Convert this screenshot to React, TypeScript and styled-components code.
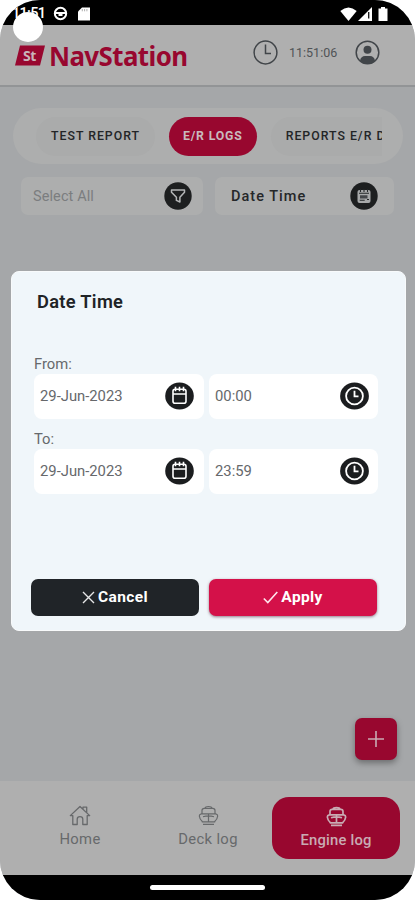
import React from "react";
import styled, { createGlobalStyle, css } from "styled-components";

const GlobalStyle = createGlobalStyle`
  * { box-sizing: border-box; }
  body { margin: 0; background: #fff; font-family: Roboto, "Liberation Sans", sans-serif; }
  svg { display: block; flex: none; }
`;

const Phone = styled.div`
  position: relative;
  display: flex;
  flex-direction: column;
  width: 415px;
  height: 900px;
  overflow: hidden;
  border-radius: 40px;
  background: #a5a7a9;
`;

const StatusBar = styled.div`
  display: flex;
  align-items: center;
  flex: none;
  height: 25px;
  padding: 2px 27px 0 12px;
  background: #000;
  color: #fff;
  font-size: 14.5px;
  font-weight: 500;
`;

const StatusTime = styled.span`
  width: 41px;
  letter-spacing: -0.7px;
`;

const StatusIcons = styled.div<{ $end?: boolean }>`
  display: flex;
  align-items: center;
  gap: ${(p) => (p.$end ? 1 : 10)}px;
  margin-left: ${(p) => (p.$end ? "auto" : "0")};
`;

const CameraHole = styled.div`
  position: absolute;
  left: 13px;
  top: 12px;
  width: 30px;
  height: 30px;
  border-radius: 50%;
  background: #fff;
`;

const Header = styled.header`
  display: flex;
  align-items: center;
  flex: none;
  height: 62px;
  padding: 0 35px 5px 15px;
  background: #afafaf;
  border-bottom: 2px solid #929496;
`;

const Brand = styled.div`
  display: flex;
  align-items: center;
  gap: 4px;
  width: 238px;
  padding-top: 6px;
  color: #98072f;
`;

const BrandName = styled.span`
  transform: scaleX(0.94);
  transform-origin: left;
  font-family: "Noto Sans", sans-serif;
  font-size: 27.5px;
  font-weight: 700;
  line-height: 30px;
  letter-spacing: -0.6px;
`;

const Clock = styled.span`
  margin: 0 auto 0 11px;
  color: #505356;
  font-size: 12.5px;
`;

const Content = styled.main`
  display: flex;
  flex-direction: column;
  flex: 1;
  padding: 21px 12px 0 13px;
`;

const Tabs = styled.div`
  height: 56px;
  padding: 0 21px 0 23px;
  border-radius: 28px;
  background: #adaeae;
`;

const TabScroller = styled.div`
  display: flex;
  align-items: center;
  gap: 14px;
  height: 56px;
  overflow: hidden;
`;

const Tab = styled.div<{ $active?: boolean }>`
  flex: none;
  height: 39px;
  padding: 0 ${(p) => (p.$active ? 14 : 15)}px;
  border-radius: 20px;
  background: ${(p) => (p.$active ? "#98072f" : "#aaabab")};
  color: ${(p) => (p.$active ? "#c9babe" : "#232527")};
  font-size: 12.3px;
  font-weight: ${(p) => (p.$active ? 700 : 500)};
  line-height: 38px;
  letter-spacing: ${(p) => (p.$active ? 0.82 : 1)}px;
  white-space: nowrap;
`;

const Filters = styled.div`
  display: flex;
  gap: 12px;
  margin: 12px 0 0 8px;
`;

const Filter = styled.div<{ $strong?: boolean }>`
  display: flex;
  align-items: center;
  justify-content: space-between;
  width: ${(p) => (p.$strong ? 179 : 182)}px;
  height: 38px;
  margin-top: 1px;
  padding: 0 ${(p) => (p.$strong ? "16px 0 16px" : "11px 0 12px")};
  border-radius: 7px;
  background: #adaeae;
  color: ${(p) => (p.$strong ? "#252729" : "#7b7d7f")};
  font-size: 14.5px;
  font-weight: ${(p) => (p.$strong ? 500 : 400)};
  letter-spacing: ${(p) => (p.$strong ? 1.02 : 0.1)}px;
`;

const AddButton = styled.button`
  display: flex;
  align-items: center;
  justify-content: center;
  align-self: flex-end;
  width: 42px;
  height: 42px;
  margin: auto 6px 21px 0;
  padding: 0;
  border: 0;
  border-radius: 7px;
  background: #98072f;
  box-shadow: 0 3px 6px rgba(0, 0, 0, 0.35);
`;

const BottomNav = styled.nav`
  display: flex;
  flex: none;
  height: 94px;
  padding: 16px 15px 0 16px;
  background: #afafaf;
`;

const NavItem = styled.div<{ $active?: boolean }>`
  display: flex;
  flex-direction: column;
  align-items: center;
  width: 128px;
  height: 62px;
  padding-top: 8px;
  gap: 4px;
  border-radius: 17px;
  color: #67696b;
  font-size: 14.8px;
  line-height: 18px;
  letter-spacing: 0.35px;
  ${(p) =>
    p.$active &&
    css`
      padding-top: 9px;
      background: #98072f;
      color: #c9abb3;
      font-weight: 500;
      letter-spacing: 0.2px;
    `}
`;

const GestureBar = styled.div`
  display: flex;
  justify-content: center;
  flex: none;
  height: 25px;
  padding-top: 10px;
  background: #000;
`;

const GestureHandle = styled.div`
  width: 115px;
  height: 5px;
  border-radius: 3px;
  background: #fff;
`;

const Dialog = styled.section`
  position: absolute;
  left: 11px;
  top: 271px;
  display: flex;
  flex-direction: column;
  width: 395px;
  height: 360px;
  padding: 18px 28px 14px 19px;
  border: 1px solid #f8fafb;
  border-radius: 8px;
  background: #f0f6fa;
`;

const DialogTitle = styled.h2`
  margin: 0 0 41px 6px;
  color: #202326;
  font-size: 18.3px;
  font-weight: 600;
  line-height: 24px;
  letter-spacing: 0.3px;
`;

const Label = styled.div`
  height: 19px;
  padding-left: 3px;
  color: #66696c;
  font-size: 14.8px;
  line-height: 18px;
`;

const FieldRow = styled.div`
  display: grid;
  grid-template-columns: 170px 169px;
  gap: 5px;
  margin: 0 0 11px 3px;
`;

const Field = styled.div`
  display: flex;
  align-items: center;
  justify-content: space-between;
  height: 45px;
  padding: 0 9px 1px 6px;
  border-radius: 8px;
  background: #fff;
  color: #66686b;
  font-size: 14.8px;
`;

const Actions = styled.div`
  display: grid;
  grid-template-columns: 168px 168px;
  gap: 10px;
  margin-top: auto;
`;

const ActionButton = styled.button<{ $primary?: boolean }>`
  display: flex;
  align-items: center;
  justify-content: center;
  gap: 3px;
  height: 37px;
  padding: 0 0 1px;
  border: 0;
  border-radius: 7px;
  background: ${(p) => (p.$primary ? "#d41149" : "#202428")};
  box-shadow: ${(p) => (p.$primary ? "0 1px 3px rgba(70, 20, 40, 0.55)" : "none")};
  color: #fff;
  font-family: inherit;
  font-size: 15.5px;
  font-weight: 700;
  letter-spacing: 0.35px;
`;

const BrandMark = () => (
  <svg width="30" height="21" viewBox="0 0 30 21">
    <path d="M5 .5h25l-5 20H0z" fill="#98072f" />
    <text x="14.5" y="15.5" textAnchor="middle" fill="#c9b4ba" fontFamily="Noto Sans, sans-serif" fontSize="14" fontWeight="700" letterSpacing="-.4">St</text>
  </svg>
);

const ClockOutline = () => (
  <svg width="25" height="25" viewBox="0 0 25 25" fill="none" stroke="#414549" strokeWidth="1.5">
    <circle cx="12.5" cy="12.5" r="11.4" />
    <path d="M12.5 4.5v9H18" />
  </svg>
);

const Profile = () => (
  <svg width="25" height="25" viewBox="0 0 25 25">
    <circle cx="12.5" cy="12.5" r="11.3" fill="none" stroke="#414549" strokeWidth="1.5" />
    <circle cx="12.5" cy="9.8" r="4" fill="#414549" />
    <path d="M5 20.5Q6 16 10 16h5q4 0 5 4.5Q17 24 12.5 24T5 20.5" fill="#414549" />
  </svg>
);

const FilterIcon = () => (
  <svg width="28" height="28" viewBox="0 0 28 28">
    <circle cx="14" cy="14" r="13.7" fill="#1d1f20" />
    <path d="M7.5 8h13v2.2l-4.6 5V20l-3.5-1.6v-3.2l-4.9-5z" fill="none" stroke="#b4b6b7" strokeWidth="1.5" strokeLinejoin="round" />
  </svg>
);

const SmallCalendar = () => (
  <svg width="28" height="28" viewBox="0 0 28 28">
    <circle cx="14" cy="14" r="13.7" fill="#1d1f20" />
    <rect x="7.5" y="8" width="13" height="13" rx="2" fill="#a7a9aa" />
    <path d="M9 11.2h10M10.5 7v3M14 7v3M17.5 7v3M9.7 18.3h5M17 17.5h2" stroke="#25282a" strokeWidth="1.1" />
    <path d="M10 13.2h7.5v3.2H10z" fill="#44474a" />
  </svg>
);

const CalendarIcon = () => (
  <svg width="30" height="28" viewBox="0 0 30 28">
    <ellipse cx="14.5" cy="14" rx="14.3" ry="13.5" fill="#1b1d1f" />
    <rect x="8" y="7.2" width="13" height="14" rx="2" fill="none" stroke="#fff" strokeWidth="1.6" />
    <path d="M8 12h13M10.5 4.8v4.5M14.5 4.8v4.5M18.5 4.8v4.5" stroke="#fff" strokeWidth="1.6" />
  </svg>
);

const ClockIcon = () => (
  <svg width="29" height="28" viewBox="0 0 29 28">
    <ellipse cx="14.5" cy="14" rx="14.4" ry="13.5" fill="#1b1d1f" />
    <circle cx="14.5" cy="14" r="8.4" fill="none" stroke="#fff" strokeWidth="1.8" />
    <path d="M14.5 8.8v5.6h4" fill="none" stroke="#fff" strokeWidth="1.8" />
  </svg>
);

const HomeIcon = () => (
  <svg width="22" height="21" viewBox="0 0 22 21" fill="none" stroke="currentColor" strokeWidth="1.3" strokeLinejoin="round">
    <path d="M1.3 10.6 11 1.5l9.7 9.1h-2.5v8.9h-4.4v-5.2q0-2.6-2.8-2.6t-2.8 2.6v5.2H3.8v-8.9zM14 4.2V2.1h3.7v5.4" />
  </svg>
);

const ShipIcon = ({ bold }: { bold?: boolean }) => (
  <svg width="21" height="21" viewBox="0 0 21 21" fill="none" stroke="currentColor" strokeWidth={bold ? 1.7 : 1.2} strokeLinejoin="round">
    <path d="M7 3.2Q7.3 1.5 10.5 1.5T14 3.2M4 8.8V5.5q0-2.2 2.3-2.2h8.4Q17 3.3 17 5.5v3.3M4.5 16.8Q1.5 14 1.3 11q0-1.8 2-2.2h14.4q2 .4 2 2.2-.2 3-3.2 5.8M10.5 8.8v7.5M5 11.8q5.5-1.8 11 0M3.8 16.8h13.4M5 19.3h11" />
  </svg>
);

const WheelIcon = () => (
  <svg width="15" height="15" viewBox="0 0 15 15" fill="none" stroke="#fff">
    <circle cx="7.5" cy="7.5" r="5.7" strokeWidth="2" />
    <path d="M2 7h11M5.5 9h4" strokeWidth="2" />
  </svg>
);

const SdCard = () => (
  <svg width="12" height="14" viewBox="0 0 12 14">
    <path d="M4 .5h8v13H0V4.5z" fill="#fff" />
    <path d="M4.3 2v2.3M6.6 2v2.3M8.9 2v2.3" stroke="#999" strokeWidth=".8" />
  </svg>
);

const Wifi = () => (
  <svg width="17" height="14" viewBox="0 0 17 14">
    <path d="M.3 4Q8.5-3.2 16.7 4L8.5 14z" fill="#fff" />
  </svg>
);

const Signal = () => (
  <svg width="14" height="14" viewBox="0 0 14 14">
    <path d="M14 0v14H0z" fill="#fff" />
    <path d="M10.7 5v6.5" stroke="#111" strokeWidth="1.3" />
  </svg>
);

const Battery = () => (
  <svg width="15" height="14" viewBox="0 0 15 14">
    <path d="M8 0h4v1.5h2.5V14h-9V1.5H8z" fill="#fff" />
  </svg>
);

const Cross = () => (
  <svg width="13" height="13" viewBox="0 0 13 13">
    <path d="m1 1 11 11M12 1 1 12" stroke="#e6e7e8" strokeWidth="1.4" />
  </svg>
);

const Check = () => (
  <svg width="15" height="13" viewBox="0 0 15 13">
    <path d="m.8 7.5 4 4L14.3 1" fill="none" stroke="#ffe6ed" strokeWidth="1.6" />
  </svg>
);

const Plus = () => (
  <svg width="16" height="16" viewBox="0 0 16 16">
    <path d="M8 0v16M0 8h16" stroke="#c9abb3" strokeWidth="1.6" />
  </svg>
);

const ranges = [
  { label: "From:", date: "29-Jun-2023", time: "00:00" },
  { label: "To:", date: "29-Jun-2023", time: "23:59" },
];

export default function App() {
  return (
    <>
      <GlobalStyle />
      <Phone>
        <StatusBar>
          <StatusTime>11:51</StatusTime>
          <StatusIcons>
            <WheelIcon />
            <SdCard />
          </StatusIcons>
          <StatusIcons $end>
            <Wifi />
            <Signal />
            <Battery />
          </StatusIcons>
        </StatusBar>
        <CameraHole />
        <Header>
          <Brand>
            <BrandMark />
            <BrandName>NavStation</BrandName>
          </Brand>
          <ClockOutline />
          <Clock>11:51:06</Clock>
          <Profile />
        </Header>
        <Content>
          <Tabs>
            <TabScroller>
              <Tab>TEST REPORT</Tab>
              <Tab $active>E/R LOGS</Tab>
              <Tab>REPORTS E/R D</Tab>
            </TabScroller>
          </Tabs>
          <Filters>
            <Filter>
              Select All
              <FilterIcon />
            </Filter>
            <Filter $strong>
              Date Time
              <SmallCalendar />
            </Filter>
          </Filters>
          <AddButton aria-label="Add">
            <Plus />
          </AddButton>
        </Content>
        <BottomNav>
          <NavItem>
            <HomeIcon />
            Home
          </NavItem>
          <NavItem>
            <ShipIcon />
            Deck log
          </NavItem>
          <NavItem $active>
            <ShipIcon bold />
            Engine log
          </NavItem>
        </BottomNav>
        <GestureBar>
          <GestureHandle />
        </GestureBar>
        <Dialog role="dialog">
          <DialogTitle>Date Time</DialogTitle>
          {ranges.map((r) => (
            <React.Fragment key={r.label}>
              <Label>{r.label}</Label>
              <FieldRow>
                <Field>
                  {r.date}
                  <CalendarIcon />
                </Field>
                <Field>
                  {r.time}
                  <ClockIcon />
                </Field>
              </FieldRow>
            </React.Fragment>
          ))}
          <Actions>
            <ActionButton>
              <Cross />
              Cancel
            </ActionButton>
            <ActionButton $primary>
              <Check />
              Apply
            </ActionButton>
          </Actions>
        </Dialog>
      </Phone>
    </>
  );
}
